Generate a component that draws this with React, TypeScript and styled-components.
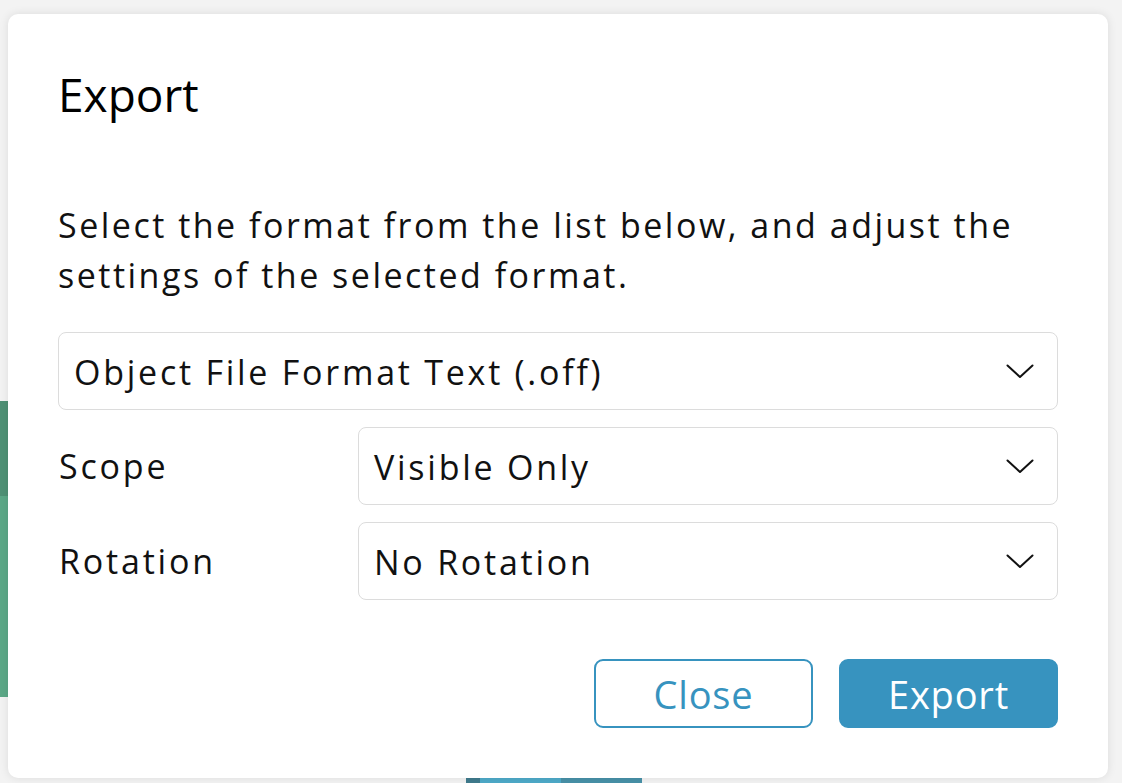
import * as React from 'react';
import styled, { createGlobalStyle } from 'styled-components';

const GlobalStyle = createGlobalStyle`
    html, body {
        margin: 0;
        padding: 0;
        background: #f3f3f3;
        font-family: "Open Sans", "Noto Sans", sans-serif;
    }
    * {
        box-sizing: border-box;
    }
`;

type Option = {
    label: string
    value: string
};

const formats: Option[] = [{ label: 'Object File Format Text (.off)', value: 'off' }];
const scopes: Option[] = [{ label: 'Visible Only', value: 'visible' }];
const rotations: Option[] = [{ label: 'No Rotation', value: 'none' }];

const Chevron = () => (
    <svg width="28" height="15" viewBox="0 0 28 15" fill="none">
        <path d="M1.5 1.5 L14 13 L26.5 1.5" stroke="#111" strokeWidth="2" strokeLinecap="round" strokeLinejoin="round" />
    </svg>
);

const SelectBox = ({ options, value }: { options: Option[], value: Option }) => (
    <Select>
        <SelectValue>{value.label}</SelectValue>
        <Caret><Chevron /></Caret>
        <HiddenList>{options.map(o => <li key={o.value}>{o.label}</li>)}</HiddenList>
    </Select>
);

export default function App() {
    return (
        <>
            <GlobalStyle />
            <Page>
                {/* app content behind the modal */}
                <SideShape />
                <BottomShape />
                <Dialog>
                    <Title>Export</Title>
                    <Description>
                        Select the format from the list below, and adjust the settings of the selected format.
                    </Description>
                    <Form>
                        <SelectBox options={formats} value={formats[0]} />
                        <FieldRow>
                            <Label>Scope</Label>
                            <SelectBox options={scopes} value={scopes[0]} />
                        </FieldRow>
                        <FieldRow>
                            <Label>Rotation</Label>
                            <SelectBox options={rotations} value={rotations[0]} />
                        </FieldRow>
                    </Form>
                    <Actions>
                        <Button variant="outline">Close</Button>
                        <Button variant="solid">Export</Button>
                    </Actions>
                </Dialog>
            </Page>
        </>
    );
}

const Page = styled.div`
    position: relative;
    width: 1122px;
    height: 783px;
    overflow: hidden;
    padding: 14px 14px 0 8px;
`;

const SideShape = styled.div`
    position: absolute;
    left: 0;
    top: 401px;
    width: 12px;
    height: 296px;
    background: linear-gradient(to bottom, #4f9175 0, #4f9175 32%, #5ca887 32%, #5ca887 100%);
`;

const BottomShape = styled.div`
    position: absolute;
    left: 466px;
    top: 770px;
    width: 176px;
    height: 20px;
    border-radius: 6px 6px 0 0;
    background: linear-gradient(to right, #3f7b8d 0, #3f7b8d 8%, #4eaac9 8%, #4eaac9 54%, #4891a8 54%, #4891a8 100%);
`;

const Dialog = styled.div`
    position: relative;
    z-index: 1;
    width: 1100px;
    background: #fff;
    border-radius: 10px;
    padding: 53px 50px 50px 50px;
    box-shadow: 0 0 10px rgba(0, 0, 0, 0.1);
    color: #111;
`;

const Title = styled.h2`
    margin: 0 0 78px;
    font-size: 46px;
    line-height: 55px;
    font-weight: 400;
    color: #000;
`;

const Description = styled.p`
    margin: 0 0 32px;
    font-size: 34px;
    line-height: 50px;
    letter-spacing: 2.5px;
`;

const Form = styled.div`
    display: flex;
    flex-direction: column;
    gap: 17px;
`;

const FieldRow = styled.div`
    display: grid;
    grid-template-columns: 300px 1fr;
    align-items: center;
`;

const Label = styled.label`
    font-size: 34px;
    letter-spacing: 2.8px;
    padding-left: 1px;
`;

const Select = styled.div`
    position: relative;
    height: 78px;
    display: flex;
    align-items: center;
    gap: 16px;
    padding: 2px 23px 0 15px;
    border: 1.5px solid #dcdcdc;
    border-radius: 8px;
    background: #fff;
`;

const SelectValue = styled.span`
    flex-grow: 1;
    font-size: 34px;
    letter-spacing: 2.75px;
    white-space: nowrap;
`;

const Caret = styled.span`
    display: flex;
    margin-top: -2px;
`;

const HiddenList = styled.ul`
    display: none;
`;

const Actions = styled.div`
    display: flex;
    justify-content: flex-end;
    gap: 26px;
    margin-top: 59px;
`;

const Button = styled.button<{ variant: 'solid' | 'outline' }>`
    width: 219px;
    height: 69px;
    border-radius: 9px;
    font-family: inherit;
    font-size: 38px;
    letter-spacing: 0.8px;
    cursor: pointer;
    border: 2px solid #3793bf;
    background: ${p => p.variant === 'solid' ? '#3793bf' : '#fff'};
    color: ${p => p.variant === 'solid' ? '#fff' : '#3793bf'};
`;
